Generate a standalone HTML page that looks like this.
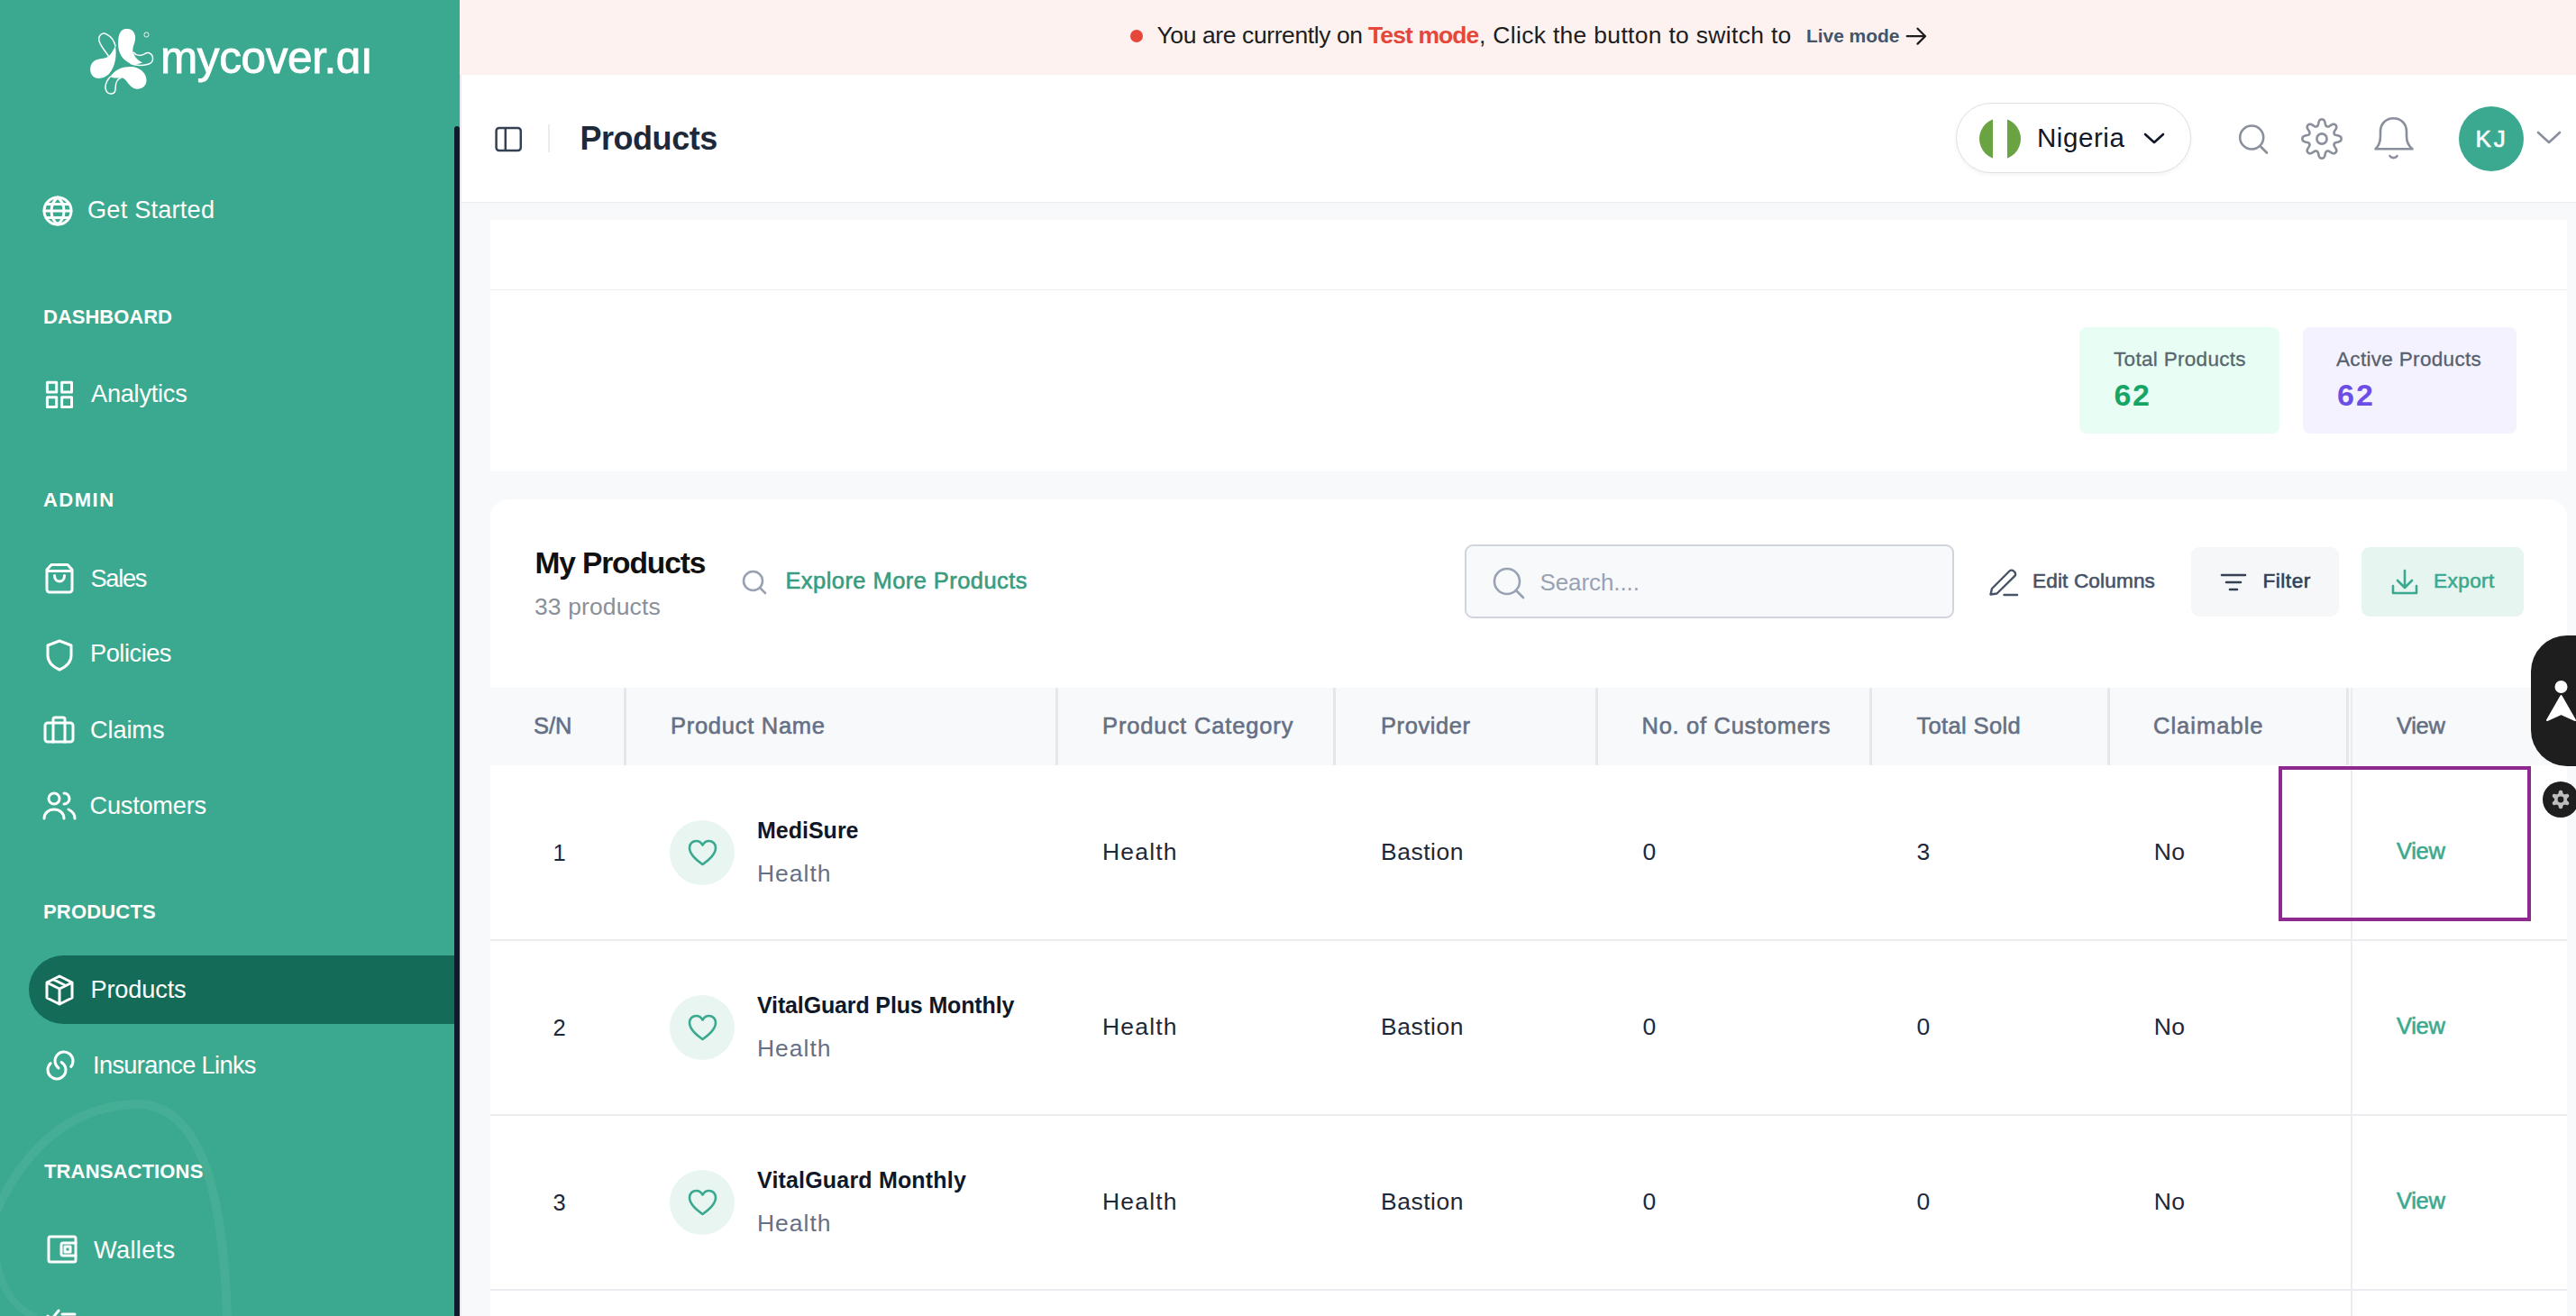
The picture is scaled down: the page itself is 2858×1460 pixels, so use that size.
<!DOCTYPE html>
<html><head><meta charset="utf-8"><title>Products</title>
<style>
html,body{margin:0;padding:0;}
body{width:2858px;height:1460px;position:relative;overflow:hidden;background:#F8F9FB;font-family:"Liberation Sans",sans-serif;}
.t{position:absolute;white-space:nowrap;}
svg{overflow:visible;}
</style></head><body>
<div style="position:absolute;left:0px;top:0px;width:510px;height:1460px;background:#3BA98F;"></div>
<svg style="position:absolute;left:0px;top:1200px;" width="510" height="260" viewBox="0 0 510 260" fill="none"><path d="M-30 230 C -10 120, 50 28, 150 25 C 225 23, 248 130, 252 262" stroke="rgba(255,255,255,0.06)" stroke-width="10"/><path d="M-5 190 C 0 230, 15 250, 40 262" stroke="rgba(255,255,255,0.05)" stroke-width="8"/></svg>
<div style="position:absolute;left:32px;top:1060px;width:478px;height:76px;background:#136B58;border-radius:38px 0 0 38px;"></div>
<div style="position:absolute;left:504px;top:140px;width:6px;height:1320px;background:#0F1A2A;border-radius:3px 3px 0 0;"></div>
<div class="t" style="left:178px;top:39.3px;font-size:49.5px;line-height:49.5px;color:#fff;font-weight:400;-webkit-text-stroke:0.9px #fff;letter-spacing:-0.4px">mycover.ɑı</div>
<svg style="position:absolute;left:95px;top:25px;" width="85" height="85" viewBox="0 0 85 85" fill="none">
<path d="M45 7 C 52 6, 56 12, 55 19 C 54 25, 51 29, 53 34 C 55 39, 58 42, 63 44.5 C 58 46.5, 54 46.5, 50 45.5 C 41 42, 36 34, 36 23 C 36 13, 39 7, 45 7 Z" fill="#fff"/>
<path d="M53 33 C 56 37, 62 37.5, 66 34.5 C 70 32, 75 35, 74.5 41 C 74 46, 67 48, 58 47.2 C 55 47, 52 46.2, 49.5 45.2" stroke="#fff" stroke-width="1.5"/>
<path d="M33 26 C 34.5 36, 33.5 48, 26 57 C 21 62, 13 63.5, 8.5 60 C 4 56, 4 47, 9 43 C 14 39, 21 41, 25.5 37.5 C 29 34, 31.5 29, 33 26 Z" fill="#fff"/>
<path d="M25.5 37.5 C 22.5 32.5, 17 27, 15 20.5 C 13.5 14.5, 18.5 10.5, 23 12.8 C 28.5 15.5, 32 21, 33.2 26.5" stroke="#fff" stroke-width="1.5"/>
<path d="M27.5 60 C 32.5 52, 41 49, 50 49 C 60 49, 67.5 56, 67.5 64 C 67.5 71, 61.5 74.5, 55.5 73.5 C 50 72.5, 47 66.5, 44 63.5 C 42.5 61.8, 40.5 61, 38.5 61.2 C 34 61.8, 30.5 62, 27.5 60 Z" fill="#fff"/>
<path d="M39.5 61.2 C 35 62, 33 68, 33 74 C 33 79, 27.5 80.5, 24 77.5 C 20.5 73.5, 21.5 66, 27.8 59.8" stroke="#fff" stroke-width="1.5"/>
<circle cx="67.5" cy="13.5" r="2.6" stroke="#fff" stroke-width="0.9"/>
</svg>
<svg style="position:absolute;left:46px;top:216px;" width="36" height="36" viewBox="0 0 36 36" fill="none"><circle cx="18" cy="18" r="15" stroke="#fff" stroke-width="3" stroke-linecap="round" stroke-linejoin="round"/><path d="M3 18h30M5 10.5h26M5 25.5h26M18 3c-5 4-7 9-7 15s2 11 7 15M18 3c5 4 7 9 7 15s-2 11-7 15" stroke="#fff" stroke-width="3" stroke-linecap="round" stroke-linejoin="round"/></svg>
<div class="t" style="left:97.0px;top:218.7px;font-size:27.20px;line-height:27.20px;font-weight:400;color:#FFFFFF;letter-spacing:0.20px;">Get Started</div>
<div class="t" style="left:48.0px;top:340.5px;font-size:22.00px;line-height:22.00px;font-weight:700;color:#FFFFFF;letter-spacing:0.00px;">DASHBOARD</div>
<svg style="position:absolute;left:49px;top:421px;" width="34" height="34" viewBox="0 0 34 34" fill="none"><rect x="3.4" y="3.3" width="10.3" height="10.6" stroke="#fff" stroke-width="3" stroke-linecap="round" stroke-linejoin="round"/><rect x="19.6" y="3.3" width="10.9" height="10.6" stroke="#fff" stroke-width="3" stroke-linecap="round" stroke-linejoin="round"/><rect x="3.4" y="19.7" width="10.3" height="10.9" stroke="#fff" stroke-width="3" stroke-linecap="round" stroke-linejoin="round"/><rect x="19.6" y="19.7" width="10.9" height="10.9" stroke="#fff" stroke-width="3" stroke-linecap="round" stroke-linejoin="round"/></svg>
<div class="t" style="left:101.0px;top:422.7px;font-size:27.20px;line-height:27.20px;font-weight:400;color:#FFFFFF;letter-spacing:-0.25px;">Analytics</div>
<div class="t" style="left:48.0px;top:543.5px;font-size:22.00px;line-height:22.00px;font-weight:700;color:#FFFFFF;letter-spacing:1.48px;">ADMIN</div>
<svg style="position:absolute;left:49px;top:623px;" width="34" height="37" viewBox="0 0 34 37" fill="none"><path d="M8 3.5h18l5 5.5v22a3 3 0 0 1-3 3H6a3 3 0 0 1-3-3V9z M3 10.5h28 M11.5 15.5c0 3.8 2.5 6.5 5.5 6.5s5.5-2.7 5.5-6.5" stroke="#fff" stroke-width="3" stroke-linecap="round" stroke-linejoin="round"/></svg>
<div class="t" style="left:100.5px;top:627.7px;font-size:27.20px;line-height:27.20px;font-weight:400;color:#FFFFFF;letter-spacing:-1.30px;">Sales</div>
<svg style="position:absolute;left:49px;top:708px;" width="34" height="38" viewBox="0 0 34 38" fill="none"><path d="M17 3 L30 8 V19 C30 27 24 32 17 35 C10 32 4 27 4 19 V8 Z" stroke="#fff" stroke-width="3" stroke-linecap="round" stroke-linejoin="round"/></svg>
<div class="t" style="left:100.0px;top:710.7px;font-size:27.20px;line-height:27.20px;font-weight:400;color:#FFFFFF;letter-spacing:-0.46px;">Policies</div>
<svg style="position:absolute;left:47px;top:793px;" width="38" height="34" viewBox="0 0 38 34" fill="none"><rect x="3" y="9" width="31" height="21" rx="3" stroke="#fff" stroke-width="3" stroke-linecap="round" stroke-linejoin="round"/><path d="M12 9V5a2 2 0 0 1 2-2h9a2 2 0 0 1 2 2v4M12 9v21M25 9v21" stroke="#fff" stroke-width="3" stroke-linecap="round" stroke-linejoin="round"/></svg>
<div class="t" style="left:100.0px;top:796.3px;font-size:27.20px;line-height:27.20px;font-weight:400;color:#FFFFFF;letter-spacing:-0.12px;">Claims</div>
<svg style="position:absolute;left:46px;top:877px;" width="40" height="34" viewBox="0 0 40 34" fill="none"><circle cx="14" cy="9" r="6" stroke="#fff" stroke-width="3" stroke-linecap="round" stroke-linejoin="round"/><path d="M3 31c0-6 5-10 11-10s11 4 11 10M25 3a6 6 0 0 1 0 12M30 21c4 2 7 5 7 10" stroke="#fff" stroke-width="3" stroke-linecap="round" stroke-linejoin="round"/></svg>
<div class="t" style="left:99.5px;top:879.7px;font-size:27.20px;line-height:27.20px;font-weight:400;color:#FFFFFF;letter-spacing:-0.23px;">Customers</div>
<div class="t" style="left:48.0px;top:1000.5px;font-size:22.00px;line-height:22.00px;font-weight:700;color:#FFFFFF;letter-spacing:0.18px;">PRODUCTS</div>
<svg style="position:absolute;left:49px;top:1080px;" width="34" height="37" viewBox="0 0 34 37" fill="none"><path d="M17 3 L31 10 V27 L17 34 L3 27 V10 Z M3 10 L17 17 L31 10 M17 17 V34 M10 6.5 L24 13.5" stroke="#fff" stroke-width="3" stroke-linecap="round" stroke-linejoin="round"/></svg>
<div class="t" style="left:100.5px;top:1083.7px;font-size:27.20px;line-height:27.20px;font-weight:400;color:#FFFFFF;letter-spacing:-0.16px;">Products</div>
<svg style="position:absolute;left:49px;top:1163px;" width="36" height="37" viewBox="0 0 36 37" fill="none"><path d="M29.66 20.43 A10 10 0 1 0 15.98 21.99 M7.18 16.69 A10 10 0 1 0 19.15 15.43" stroke="#fff" stroke-width="3" stroke-linecap="round" stroke-linejoin="round"/></svg>
<div class="t" style="left:103.0px;top:1167.7px;font-size:27.20px;line-height:27.20px;font-weight:400;color:#FFFFFF;letter-spacing:-0.64px;">Insurance Links</div>
<div class="t" style="left:49.0px;top:1288.5px;font-size:22.00px;line-height:22.00px;font-weight:700;color:#FFFFFF;letter-spacing:0.14px;">TRANSACTIONS</div>
<svg style="position:absolute;left:51px;top:1369px;" width="36" height="34" viewBox="0 0 36 34" fill="none"><rect x="3" y="3" width="30" height="28" rx="2" stroke="#fff" stroke-width="3" stroke-linecap="round" stroke-linejoin="round"/><path d="M33 10H19a2 2 0 0 0-2 2v10a2 2 0 0 0 2 2h14" stroke="#fff" stroke-width="3" stroke-linecap="round" stroke-linejoin="round"/><rect x="21" y="14" width="6" height="6" stroke="#fff" stroke-width="3" stroke-linecap="round" stroke-linejoin="round"/></svg>
<div class="t" style="left:104.0px;top:1372.7px;font-size:27.20px;line-height:27.20px;font-weight:400;color:#FFFFFF;letter-spacing:0.33px;">Wallets</div>
<svg style="position:absolute;left:49px;top:1450px;" width="40" height="20" viewBox="0 0 40 20" fill="none"><path d="M4 10l4 4 8-10M20 8h14M20 14h14" stroke="#fff" stroke-width="3" stroke-linecap="round" stroke-linejoin="round"/></svg>
<div style="position:absolute;left:510px;top:0px;width:2348px;height:83px;background:#FDF2EF;"></div>
<div style="position:absolute;left:1254px;top:33px;width:14px;height:14px;background:#E5483B;border-radius:50%;"></div>
<div class="t" style="left:1283.5px;top:25.8px;font-size:26.50px;line-height:26.50px;font-weight:400;color:#1D1D1F;letter-spacing:-0.40px;">You are currently on</div>
<div class="t" style="left:1518.0px;top:25.8px;font-size:26.50px;line-height:26.50px;font-weight:700;color:#E5483B;letter-spacing:-0.90px;">Test mode</div>
<div class="t" style="left:1641.0px;top:25.8px;font-size:26.50px;line-height:26.50px;font-weight:400;color:#1D1D1F;letter-spacing:0.30px;">, Click the button to switch to</div>
<div class="t" style="left:2004.0px;top:28.9px;font-size:21.00px;line-height:21.00px;font-weight:700;color:#475467;letter-spacing:-0.05px;">Live mode</div>
<svg style="position:absolute;left:2112px;top:28px;" width="26" height="24" viewBox="0 0 26 24" fill="none"><path d="M3.8 12.2h20.2M15.5 3.8l8.5 8.4-8.5 8.4" stroke="#1D1D1F" stroke-width="2.3" stroke-linecap="round" stroke-linejoin="round"/></svg>
<div style="position:absolute;left:510px;top:83px;width:2348px;height:141px;background:#fff;"></div>
<div style="position:absolute;left:510px;top:224px;width:2348px;height:1px;background:#EAECF0;"></div>
<div style="position:absolute;left:510px;top:83px;width:2px;height:1377px;background:#E9E7F0;"></div>
<svg style="position:absolute;left:547px;top:139px;" width="33" height="30" viewBox="0 0 33 30" fill="none"><rect x="3.6" y="3" width="27.2" height="25" rx="3.2" stroke="#344054" stroke-width="2.5"/><path d="M13.8 3v25" stroke="#344054" stroke-width="2.5"/></svg>
<div style="position:absolute;left:608px;top:138px;width:2px;height:31px;background:#EAECF0;"></div>
<div class="t" style="left:643.5px;top:135.8px;font-size:36.00px;line-height:36.00px;font-weight:700;color:#1D2939;letter-spacing:-0.47px;">Products</div>
<div style="position:absolute;left:2170px;top:114px;width:261px;height:78px;box-sizing:border-box;border:1.5px solid #E0E0E0;border-radius:39px;background:#fff;box-shadow:0 2px 4px rgba(16,24,40,0.05);"></div>
<svg style="position:absolute;left:2195px;top:131px;" width="48" height="46" viewBox="0 0 48 46" fill="none"><defs><clipPath id="fc"><circle cx="24" cy="23" r="23"/></clipPath></defs><g clip-path="url(#fc)"><rect x="0" y="0" width="16" height="46" fill="#6AA342"/><rect x="16" y="0" width="16" height="46" fill="#fff"/><rect x="32" y="0" width="16" height="46" fill="#6AA342"/></g></svg>
<div class="t" style="left:2260.0px;top:138.3px;font-size:29.50px;line-height:29.50px;font-weight:400;color:#101828;letter-spacing:0.57px;">Nigeria</div>
<svg style="position:absolute;left:2376px;top:144px;" width="28" height="20" viewBox="0 0 28 20" fill="none"><path d="M4 5l10 9 10-9" stroke="#101828" stroke-width="2.6" stroke-linecap="round" stroke-linejoin="round"/></svg>
<svg style="position:absolute;left:2481px;top:135px;" width="40" height="40" viewBox="0 0 40 40" fill="none"><circle cx="17.2" cy="17.5" r="13" stroke="#8A8F9C" stroke-width="2.6" stroke-linecap="round" stroke-linejoin="round"/><path d="M27.5 28L34 34.5" stroke="#8A8F9C" stroke-width="2.6" stroke-linecap="round" stroke-linejoin="round"/></svg>
<svg style="position:absolute;left:2551px;top:129px;" width="50" height="50" viewBox="0 0 50 50" fill="none"><path fill="none" stroke="#8A8F9C" stroke-width="2.6" stroke-linejoin="round" d="M25.00 3.40 L25.56 3.44 L26.12 3.56 L26.67 3.78 L27.19 4.15 L27.67 4.72 L28.08 5.54 L28.41 6.58 L28.67 7.72 L28.90 8.77 L29.13 9.60 L29.38 10.20 L29.67 10.63 L29.98 10.93 L30.31 11.16 L30.66 11.33 L31.03 11.45 L31.43 11.53 L31.86 11.53 L32.36 11.44 L32.97 11.19 L33.72 10.77 L34.62 10.18 L35.61 9.56 L36.58 9.06 L37.45 8.77 L38.20 8.71 L38.83 8.81 L39.37 9.04 L39.85 9.35 L40.27 9.73 L40.65 10.15 L40.96 10.63 L41.19 11.17 L41.29 11.80 L41.23 12.55 L40.94 13.42 L40.44 14.39 L39.82 15.38 L39.23 16.28 L38.81 17.03 L38.56 17.64 L38.47 18.14 L38.47 18.57 L38.55 18.97 L38.67 19.34 L38.84 19.69 L39.07 20.02 L39.37 20.33 L39.80 20.62 L40.40 20.87 L41.23 21.10 L42.28 21.33 L43.42 21.59 L44.46 21.92 L45.28 22.33 L45.85 22.81 L46.22 23.33 L46.44 23.88 L46.56 24.44 L46.60 25.00 L46.56 25.56 L46.44 26.12 L46.22 26.67 L45.85 27.19 L45.28 27.67 L44.46 28.08 L43.42 28.41 L42.28 28.67 L41.23 28.90 L40.40 29.13 L39.80 29.38 L39.37 29.67 L39.07 29.98 L38.84 30.31 L38.67 30.66 L38.55 31.03 L38.47 31.43 L38.47 31.86 L38.56 32.36 L38.81 32.97 L39.23 33.72 L39.82 34.62 L40.44 35.61 L40.94 36.58 L41.23 37.45 L41.29 38.20 L41.19 38.83 L40.96 39.37 L40.65 39.85 L40.27 40.27 L39.85 40.65 L39.37 40.96 L38.83 41.19 L38.20 41.29 L37.45 41.23 L36.58 40.94 L35.61 40.44 L34.62 39.82 L33.72 39.23 L32.97 38.81 L32.36 38.56 L31.86 38.47 L31.43 38.47 L31.03 38.55 L30.66 38.67 L30.31 38.84 L29.98 39.07 L29.67 39.37 L29.38 39.80 L29.13 40.40 L28.90 41.23 L28.67 42.28 L28.41 43.42 L28.08 44.46 L27.67 45.28 L27.19 45.85 L26.67 46.22 L26.12 46.44 L25.56 46.56 L25.00 46.60 L24.44 46.56 L23.88 46.44 L23.33 46.22 L22.81 45.85 L22.33 45.28 L21.92 44.46 L21.59 43.42 L21.33 42.28 L21.10 41.23 L20.87 40.40 L20.62 39.80 L20.33 39.37 L20.02 39.07 L19.69 38.84 L19.34 38.67 L18.97 38.55 L18.57 38.47 L18.14 38.47 L17.64 38.56 L17.03 38.81 L16.28 39.23 L15.38 39.82 L14.39 40.44 L13.42 40.94 L12.55 41.23 L11.80 41.29 L11.17 41.19 L10.63 40.96 L10.15 40.65 L9.73 40.27 L9.35 39.85 L9.04 39.37 L8.81 38.83 L8.71 38.20 L8.77 37.45 L9.06 36.58 L9.56 35.61 L10.18 34.62 L10.77 33.72 L11.19 32.97 L11.44 32.36 L11.53 31.86 L11.53 31.43 L11.45 31.03 L11.33 30.66 L11.16 30.31 L10.93 29.98 L10.63 29.67 L10.20 29.38 L9.60 29.13 L8.77 28.90 L7.72 28.67 L6.58 28.41 L5.54 28.08 L4.72 27.67 L4.15 27.19 L3.78 26.67 L3.56 26.12 L3.44 25.56 L3.40 25.00 L3.44 24.44 L3.56 23.88 L3.78 23.33 L4.15 22.81 L4.72 22.33 L5.54 21.92 L6.58 21.59 L7.72 21.33 L8.77 21.10 L9.60 20.87 L10.20 20.62 L10.63 20.33 L10.93 20.02 L11.16 19.69 L11.33 19.34 L11.45 18.97 L11.53 18.57 L11.53 18.14 L11.44 17.64 L11.19 17.03 L10.77 16.28 L10.18 15.38 L9.56 14.39 L9.06 13.42 L8.77 12.55 L8.71 11.80 L8.81 11.17 L9.04 10.63 L9.35 10.15 L9.73 9.73 L10.15 9.35 L10.63 9.04 L11.17 8.81 L11.80 8.71 L12.55 8.77 L13.42 9.06 L14.39 9.56 L15.38 10.18 L16.28 10.77 L17.03 11.19 L17.64 11.44 L18.14 11.53 L18.57 11.53 L18.97 11.45 L19.34 11.33 L19.69 11.16 L20.02 10.93 L20.33 10.63 L20.62 10.20 L20.87 9.60 L21.10 8.77 L21.33 7.72 L21.59 6.58 L21.92 5.54 L22.33 4.72 L22.81 4.15 L23.33 3.78 L23.88 3.56 L24.44 3.44Z"/><circle cx="25" cy="25" r="5.6" stroke="#8A8F9C" stroke-width="2.6"/></svg>
<svg style="position:absolute;left:2632px;top:129px;" width="48" height="50" viewBox="0 0 48 50" fill="none"><path d="M3.5 36.3 C 7 33, 9 28, 9 22 V 17 C 9 8, 15.5 2.2, 23.5 2.2 C 31.5 2.2, 38 8, 38 17 V 22 C 38 28, 40.5 33, 44.5 36.3 Z" stroke="#8A8F9C" stroke-width="2.6" stroke-linecap="round" stroke-linejoin="round"/><path d="M19.5 44 C 21 46.8, 26 46.8, 27.5 44" stroke="#8A8F9C" stroke-width="2.6" stroke-linecap="round" stroke-linejoin="round"/></svg>
<div style="position:absolute;left:2728px;top:118px;width:72px;height:72px;background:#3BA98F;border-radius:50%;"></div>
<div class="t" style="left:2746.5px;top:140.9px;font-size:26.00px;line-height:26.00px;font-weight:400;-webkit-text-stroke:0.6px #fff;color:#fff;letter-spacing:3.00px;">KJ</div>
<svg style="position:absolute;left:2812px;top:142px;" width="32" height="22" viewBox="0 0 32 22" fill="none"><path d="M4 5l12 11 12-11" stroke="#8A8F9C" stroke-width="2.6" stroke-linecap="round" stroke-linejoin="round"/></svg>
<div style="position:absolute;left:544px;top:244px;width:2304px;height:279px;background:#fff;"></div>
<div style="position:absolute;left:544px;top:321px;width:2304px;height:1px;background:#EEF0F3;"></div>
<div style="position:absolute;left:2307px;top:363px;width:222px;height:118px;background:#E8FDF3;border-radius:8px;"></div>
<div style="position:absolute;left:2555px;top:363px;width:237px;height:118px;background:#F3F2FE;border-radius:8px;"></div>
<div class="t" style="left:2345.0px;top:388.4px;font-size:22.50px;line-height:22.50px;font-weight:400;color:#56666E;letter-spacing:0.31px;-webkit-text-stroke:0.3px #56666E;">Total Products</div>
<div class="t" style="left:2345.6px;top:420.6px;font-size:34.00px;line-height:34.00px;font-weight:700;color:#17A566;letter-spacing:1.60px;">62</div>
<div class="t" style="left:2592.0px;top:388.4px;font-size:22.50px;line-height:22.50px;font-weight:400;color:#56606E;letter-spacing:0.32px;-webkit-text-stroke:0.3px #56606E;">Active Products</div>
<div class="t" style="left:2593.0px;top:420.6px;font-size:34.00px;line-height:34.00px;font-weight:700;color:#6B4EE6;letter-spacing:2.00px;">62</div>
<div style="position:absolute;left:544px;top:554px;width:2304px;height:906px;background:#fff;border-radius:20px 20px 0 0;"></div>
<div class="t" style="left:593.4px;top:608.4px;font-size:33.50px;line-height:33.50px;font-weight:700;color:#101010;letter-spacing:-1.10px;">My Products</div>
<div class="t" style="left:593.0px;top:659.8px;font-size:26.50px;line-height:26.50px;font-weight:400;color:#8A9099;letter-spacing:0.12px;">33 products</div>
<svg style="position:absolute;left:822px;top:631px;" width="32" height="30" viewBox="0 0 32 30" fill="none"><circle cx="13.5" cy="13.5" r="10.5" stroke="#98A2B3" stroke-width="2.6" stroke-linecap="round"/><path d="M21.5 21.5L27 27" stroke="#98A2B3" stroke-width="2.6" stroke-linecap="round"/></svg>
<div class="t" style="left:871.4px;top:632.3px;font-size:25.50px;line-height:25.50px;font-weight:400;-webkit-text-stroke:0.6px #3A9C7F;color:#3A9C7F;letter-spacing:0.44px;">Explore More Products</div>
<div style="position:absolute;left:1625px;top:604px;width:543px;height:82px;box-sizing:border-box;border:2.5px solid #D0D5DD;border-radius:9px;background:#F8F9FB;"></div>
<svg style="position:absolute;left:1655px;top:628px;" width="40" height="38" viewBox="0 0 40 38" fill="none"><circle cx="17" cy="17" r="14" stroke="#98A2B3" stroke-width="2.6" stroke-linecap="round"/><path d="M27 27L35 35" stroke="#98A2B3" stroke-width="2.6" stroke-linecap="round"/></svg>
<div class="t" style="left:1708.4px;top:633.4px;font-size:26.00px;line-height:26.00px;font-weight:400;color:#98A2B3;letter-spacing:-0.08px;">Search....</div>
<svg style="position:absolute;left:2205px;top:629px;" width="36" height="34" viewBox="0 0 36 34" fill="none"><path d="M3.5 30.5 L5 24 L24.5 4.5 a3.2 3.2 0 0 1 4.5 0 l1.2 1.2 a3.2 3.2 0 0 1 0 4.5 L10.5 29.5 Z M18.5 31 H33" stroke="#475467" stroke-width="2.4" stroke-linejoin="round" stroke-linecap="round"/></svg>
<div class="t" style="left:2255.0px;top:634.4px;font-size:22.60px;line-height:22.60px;font-weight:400;-webkit-text-stroke:0.6px #475467;color:#475467;letter-spacing:0.14px;">Edit Columns</div>
<div style="position:absolute;left:2431px;top:607px;width:164px;height:77px;background:#F5F7F9;border-radius:9px;"></div>
<svg style="position:absolute;left:2462px;top:634px;" width="32" height="24" viewBox="0 0 32 24" fill="none"><path d="M3 4h26M8 12h16M12 20h8" stroke="#344054" stroke-width="2.6" stroke-linecap="round"/></svg>
<div class="t" style="left:2510.6px;top:634.4px;font-size:22.60px;line-height:22.60px;font-weight:400;-webkit-text-stroke:0.6px #344054;color:#344054;letter-spacing:0.48px;">Filter</div>
<div style="position:absolute;left:2620px;top:607px;width:180px;height:77px;background:#E6F5F0;border-radius:9px;"></div>
<svg style="position:absolute;left:2652px;top:630px;" width="32" height="32" viewBox="0 0 32 32" fill="none"><path d="M16 3v18M8 14l8 8 8-8M3 20v8h26v-8" stroke="#3BA98F" stroke-width="2.6" stroke-linecap="round" stroke-linejoin="round"/></svg>
<div class="t" style="left:2700.0px;top:634.4px;font-size:22.60px;line-height:22.60px;font-weight:400;-webkit-text-stroke:0.6px #3BA98F;color:#3BA98F;letter-spacing:0.40px;">Export</div>
<div style="position:absolute;left:544px;top:763px;width:2304px;height:86px;background:#F8F9FB;"></div>
<div style="position:absolute;left:691.5px;top:763px;width:3px;height:86px;background:#E4E7EC;"></div>
<div style="position:absolute;left:1170.5px;top:763px;width:3px;height:86px;background:#E4E7EC;"></div>
<div style="position:absolute;left:1479px;top:763px;width:3px;height:86px;background:#E4E7EC;"></div>
<div style="position:absolute;left:1769.5px;top:763px;width:3px;height:86px;background:#E4E7EC;"></div>
<div style="position:absolute;left:2073.5px;top:763px;width:3px;height:86px;background:#E4E7EC;"></div>
<div style="position:absolute;left:2337.5px;top:763px;width:3px;height:86px;background:#E4E7EC;"></div>
<div style="position:absolute;left:2603px;top:763px;width:3px;height:86px;background:#E4E7EC;"></div>
<div class="t" style="left:592.0px;top:792.5px;font-size:25.50px;line-height:25.50px;font-weight:400;-webkit-text-stroke:0.6px #667085;color:#667085;letter-spacing:0.00px;">S/N</div>
<div class="t" style="left:744.0px;top:792.5px;font-size:25.50px;line-height:25.50px;font-weight:400;-webkit-text-stroke:0.6px #667085;color:#667085;letter-spacing:0.73px;">Product Name</div>
<div class="t" style="left:1223.0px;top:792.5px;font-size:25.50px;line-height:25.50px;font-weight:400;-webkit-text-stroke:0.6px #667085;color:#667085;letter-spacing:0.87px;">Product Category</div>
<div class="t" style="left:1532.0px;top:792.5px;font-size:25.50px;line-height:25.50px;font-weight:400;-webkit-text-stroke:0.6px #667085;color:#667085;letter-spacing:0.57px;">Provider</div>
<div class="t" style="left:1821.5px;top:792.5px;font-size:25.50px;line-height:25.50px;font-weight:400;-webkit-text-stroke:0.6px #667085;color:#667085;letter-spacing:0.71px;">No. of Customers</div>
<div class="t" style="left:2126.4px;top:792.5px;font-size:25.50px;line-height:25.50px;font-weight:400;-webkit-text-stroke:0.6px #667085;color:#667085;letter-spacing:0.38px;">Total Sold</div>
<div class="t" style="left:2389.0px;top:792.5px;font-size:25.50px;line-height:25.50px;font-weight:400;-webkit-text-stroke:0.6px #667085;color:#667085;letter-spacing:1.02px;">Claimable</div>
<div class="t" style="left:2659.0px;top:792.5px;font-size:25.50px;line-height:25.50px;font-weight:400;-webkit-text-stroke:0.6px #667085;color:#667085;letter-spacing:-0.33px;">View</div>
<div style="position:absolute;left:544px;top:1042px;width:2304px;height:2px;background:#EAECF0;"></div>
<div class="t" style="left:613.5px;top:933.5px;font-size:25.50px;line-height:25.50px;font-weight:400;color:#1D2939;letter-spacing:0.00px;">1</div>
<div style="position:absolute;left:743px;top:910px;width:72px;height:72px;background:#E8F5F1;border-radius:50%;"></div>
<svg style="position:absolute;left:762px;top:930px;" width="35" height="32" viewBox="0 0 35 32" fill="none"><path d="M17.5 29 C 11 24, 3 18, 3 10.5 C 3 6, 6.5 3, 10.5 3 C 13.5 3, 16 4.8, 17.5 7.5 C 19 4.8, 21.5 3, 24.5 3 C 28.5 3, 32 6, 32 10.5 C 32 18, 24 24, 17.5 29 Z" stroke="#3BA98F" stroke-width="2.6" stroke-linejoin="round"/></svg>
<div class="t" style="left:840.0px;top:908.6px;font-size:25.00px;line-height:25.00px;font-weight:700;color:#101828;letter-spacing:0.00px;">MediSure</div>
<div class="t" style="left:840.0px;top:955.8px;font-size:26.50px;line-height:26.50px;font-weight:400;color:#667085;letter-spacing:0.98px;">Health</div>
<div class="t" style="left:1223.0px;top:931.8px;font-size:26.50px;line-height:26.50px;font-weight:400;color:#1D2939;letter-spacing:1.20px;">Health</div>
<div class="t" style="left:1532.0px;top:931.8px;font-size:26.50px;line-height:26.50px;font-weight:400;color:#1D2939;letter-spacing:0.52px;">Bastion</div>
<div class="t" style="left:1822.5px;top:931.8px;font-size:26.50px;line-height:26.50px;font-weight:400;color:#1D2939;letter-spacing:0.00px;">0</div>
<div class="t" style="left:2126.4px;top:931.8px;font-size:26.50px;line-height:26.50px;font-weight:400;color:#1D2939;letter-spacing:0.00px;">3</div>
<div class="t" style="left:2389.8px;top:931.8px;font-size:26.50px;line-height:26.50px;font-weight:400;color:#1D2939;letter-spacing:0.20px;">No</div>
<div class="t" style="left:2659.0px;top:932.0px;font-size:25.50px;line-height:25.50px;font-weight:400;-webkit-text-stroke:0.6px #3BA98F;color:#3BA98F;letter-spacing:-0.33px;">View</div>
<div style="position:absolute;left:544px;top:1236px;width:2304px;height:2px;background:#EAECF0;"></div>
<div class="t" style="left:613.5px;top:1127.5px;font-size:25.50px;line-height:25.50px;font-weight:400;color:#1D2939;letter-spacing:0.00px;">2</div>
<div style="position:absolute;left:743px;top:1104px;width:72px;height:72px;background:#E8F5F1;border-radius:50%;"></div>
<svg style="position:absolute;left:762px;top:1124px;" width="35" height="32" viewBox="0 0 35 32" fill="none"><path d="M17.5 29 C 11 24, 3 18, 3 10.5 C 3 6, 6.5 3, 10.5 3 C 13.5 3, 16 4.8, 17.5 7.5 C 19 4.8, 21.5 3, 24.5 3 C 28.5 3, 32 6, 32 10.5 C 32 18, 24 24, 17.5 29 Z" stroke="#3BA98F" stroke-width="2.6" stroke-linejoin="round"/></svg>
<div class="t" style="left:840.0px;top:1102.6px;font-size:25.00px;line-height:25.00px;font-weight:700;color:#101828;letter-spacing:-0.14px;">VitalGuard Plus Monthly</div>
<div class="t" style="left:840.0px;top:1149.8px;font-size:26.50px;line-height:26.50px;font-weight:400;color:#667085;letter-spacing:0.98px;">Health</div>
<div class="t" style="left:1223.0px;top:1125.8px;font-size:26.50px;line-height:26.50px;font-weight:400;color:#1D2939;letter-spacing:1.20px;">Health</div>
<div class="t" style="left:1532.0px;top:1125.8px;font-size:26.50px;line-height:26.50px;font-weight:400;color:#1D2939;letter-spacing:0.52px;">Bastion</div>
<div class="t" style="left:1822.5px;top:1125.8px;font-size:26.50px;line-height:26.50px;font-weight:400;color:#1D2939;letter-spacing:0.00px;">0</div>
<div class="t" style="left:2126.4px;top:1125.8px;font-size:26.50px;line-height:26.50px;font-weight:400;color:#1D2939;letter-spacing:0.00px;">0</div>
<div class="t" style="left:2389.8px;top:1125.8px;font-size:26.50px;line-height:26.50px;font-weight:400;color:#1D2939;letter-spacing:0.20px;">No</div>
<div class="t" style="left:2659.0px;top:1126.0px;font-size:25.50px;line-height:25.50px;font-weight:400;-webkit-text-stroke:0.6px #3BA98F;color:#3BA98F;letter-spacing:-0.33px;">View</div>
<div style="position:absolute;left:544px;top:1430px;width:2304px;height:2px;background:#EAECF0;"></div>
<div class="t" style="left:613.5px;top:1321.5px;font-size:25.50px;line-height:25.50px;font-weight:400;color:#1D2939;letter-spacing:0.00px;">3</div>
<div style="position:absolute;left:743px;top:1298px;width:72px;height:72px;background:#E8F5F1;border-radius:50%;"></div>
<svg style="position:absolute;left:762px;top:1318px;" width="35" height="32" viewBox="0 0 35 32" fill="none"><path d="M17.5 29 C 11 24, 3 18, 3 10.5 C 3 6, 6.5 3, 10.5 3 C 13.5 3, 16 4.8, 17.5 7.5 C 19 4.8, 21.5 3, 24.5 3 C 28.5 3, 32 6, 32 10.5 C 32 18, 24 24, 17.5 29 Z" stroke="#3BA98F" stroke-width="2.6" stroke-linejoin="round"/></svg>
<div class="t" style="left:840.0px;top:1296.6px;font-size:25.00px;line-height:25.00px;font-weight:700;color:#101828;letter-spacing:0.18px;">VitalGuard Monthly</div>
<div class="t" style="left:840.0px;top:1343.8px;font-size:26.50px;line-height:26.50px;font-weight:400;color:#667085;letter-spacing:0.98px;">Health</div>
<div class="t" style="left:1223.0px;top:1319.8px;font-size:26.50px;line-height:26.50px;font-weight:400;color:#1D2939;letter-spacing:1.20px;">Health</div>
<div class="t" style="left:1532.0px;top:1319.8px;font-size:26.50px;line-height:26.50px;font-weight:400;color:#1D2939;letter-spacing:0.52px;">Bastion</div>
<div class="t" style="left:1822.5px;top:1319.8px;font-size:26.50px;line-height:26.50px;font-weight:400;color:#1D2939;letter-spacing:0.00px;">0</div>
<div class="t" style="left:2126.4px;top:1319.8px;font-size:26.50px;line-height:26.50px;font-weight:400;color:#1D2939;letter-spacing:0.00px;">0</div>
<div class="t" style="left:2389.8px;top:1319.8px;font-size:26.50px;line-height:26.50px;font-weight:400;color:#1D2939;letter-spacing:0.20px;">No</div>
<div class="t" style="left:2659.0px;top:1320.0px;font-size:25.50px;line-height:25.50px;font-weight:400;-webkit-text-stroke:0.6px #3BA98F;color:#3BA98F;letter-spacing:-0.33px;">View</div>
<div style="position:absolute;left:2608px;top:763px;width:1.5px;height:697px;background:#EAECF0;"></div>
<div style="position:absolute;left:2528px;top:850px;width:280px;height:172px;box-sizing:border-box;border:4.5px solid #8E2A8F;"></div>
<div style="position:absolute;left:2808px;top:705px;width:60px;height:145px;background:#1E1E1E;border-radius:40px 0 0 40px;"></div>
<svg style="position:absolute;left:2822px;top:748px;" width="40" height="56" viewBox="0 0 40 56" fill="none"><circle cx="19.5" cy="14" r="7" fill="#fff"/><path d="M19.5 24 L4 51 L19.5 44 L35 51 Z" fill="#fff" stroke="#fff" stroke-width="2" stroke-linejoin="round"/></svg>
<div style="position:absolute;left:2821px;top:867px;width:40px;height:40px;background:#1E1E1E;border-radius:50%;"></div>
<svg style="position:absolute;left:2828px;top:874px;" width="26" height="26" viewBox="0 0 26 26" fill="none"><path fill="#BDBDBD" d="M13.00 2.70 L13.54 2.74 L14.06 2.88 L14.55 3.19 L14.96 3.79 L15.23 4.69 L15.41 5.59 L15.61 6.21 L15.86 6.58 L16.14 6.83 L16.45 7.02 L16.77 7.19 L17.13 7.32 L17.58 7.35 L18.21 7.21 L19.08 6.92 L20.00 6.70 L20.72 6.75 L21.23 7.02 L21.62 7.40 L21.92 7.85 L22.15 8.34 L22.29 8.86 L22.27 9.44 L21.95 10.09 L21.31 10.77 L20.62 11.38 L20.18 11.86 L19.99 12.27 L19.92 12.64 L19.90 13.00 L19.92 13.36 L19.99 13.73 L20.18 14.14 L20.62 14.62 L21.31 15.23 L21.95 15.91 L22.27 16.56 L22.29 17.14 L22.15 17.66 L21.92 18.15 L21.62 18.60 L21.23 18.98 L20.72 19.25 L20.00 19.30 L19.08 19.08 L18.21 18.79 L17.58 18.65 L17.13 18.68 L16.77 18.81 L16.45 18.98 L16.14 19.17 L15.86 19.42 L15.61 19.79 L15.41 20.41 L15.23 21.31 L14.96 22.21 L14.55 22.81 L14.06 23.12 L13.54 23.26 L13.00 23.30 L12.46 23.26 L11.94 23.12 L11.45 22.81 L11.04 22.21 L10.77 21.31 L10.59 20.41 L10.39 19.79 L10.14 19.42 L9.86 19.17 L9.55 18.98 L9.23 18.81 L8.87 18.68 L8.42 18.65 L7.79 18.79 L6.92 19.08 L6.00 19.30 L5.28 19.25 L4.77 18.98 L4.38 18.60 L4.08 18.15 L3.85 17.66 L3.71 17.14 L3.73 16.56 L4.05 15.91 L4.69 15.23 L5.38 14.62 L5.82 14.14 L6.01 13.73 L6.08 13.36 L6.10 13.00 L6.08 12.64 L6.01 12.27 L5.82 11.86 L5.38 11.38 L4.69 10.77 L4.05 10.09 L3.73 9.44 L3.71 8.86 L3.85 8.34 L4.08 7.85 L4.38 7.40 L4.77 7.02 L5.28 6.75 L6.00 6.70 L6.92 6.92 L7.79 7.21 L8.42 7.35 L8.87 7.32 L9.23 7.19 L9.55 7.02 L9.86 6.83 L10.14 6.58 L10.39 6.21 L10.59 5.59 L10.77 4.69 L11.04 3.79 L11.45 3.19 L11.94 2.88 L12.46 2.74Z"/><circle cx="13" cy="13" r="3.4" fill="#1E1E1E"/></svg>
</body></html>
